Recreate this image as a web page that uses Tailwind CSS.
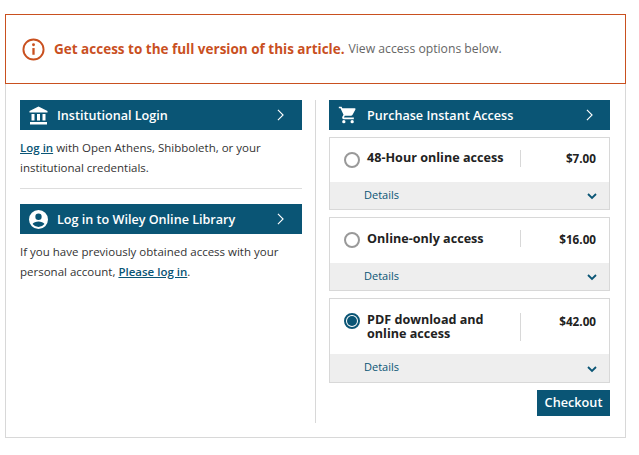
<!DOCTYPE html>
<html lang="en">
<head>
  <meta charset="UTF-8">
  <title>Get access</title>
  <script src="https://cdn.jsdelivr.net/npm/@tailwindcss/browser@4"></script>
</head>
<body class="bg-white font-['Open_Sans',sans-serif] text-[#333] w-[639px] h-[455px] overflow-hidden">
  <div class="w-[621px] ml-[5px] pt-[14px]">
    <!-- Alert -->
    <div class="h-[70px] border border-[#c9501f] flex items-center pl-[16px] text-[13.5px]">
      <svg class="w-[23px] h-[23px] mr-[9px] shrink-0" viewBox="0 0 24 24" fill="none" stroke="#c9501f">
        <circle cx="12" cy="12" r="10.5" stroke-width="2"/>
        <path d="M12 10.500v7" stroke-width="2.400"/>
        <circle cx="12" cy="7" r="1.500" fill="#c9501f" stroke="none"/>
      </svg>
      <span class="font-bold text-[#c9501f]">Get access to the full version of this article.</span>
      <span class="ml-[4px] text-[12.2px] text-[#666]">View access options below.</span>
    </div>

    <!-- Body -->
    <div class="h-[354px] border border-t-0 border-[#d8d8d8] pt-[16px] pl-[14px] flex">
      <!-- Left column -->
      <div class="w-[282px] text-[11.5px] leading-[20px]">
        <div class="h-[30px] bg-[#0a5575] text-white flex items-center pl-[9px] pr-[18px]">
          <svg class="w-[19px] h-[19px] mr-[9px]" viewBox="0 0 19 19" fill="white"><path d="M9.500 0.500 18.500 5v1.500H.5V5zM1 16h17v2.500H1zM2.500 8h3v6.500h-3zM8 8h3v6.500H8zM13.500 8h3v6.500h-3z"/></svg>
          <span class="text-[12.6px] leading-[20px] mt-px font-semibold flex-1">Institutional Login</span>
          <svg class="w-[7px] h-[12px]" viewBox="0 0 8 14" fill="none" stroke="white" stroke-width="1.300"><path d="M1 1l6 6-6 6"/></svg>
        </div>
        <p class="mt-[8px] pb-[10px] border-b border-[#ddd]"><a class="text-[#0a5575] font-semibold underline">Log in</a> with Open Athens, Shibboleth, or your institutional credentials.</p>
        <div class="mt-[15px] h-[30px] bg-[#0a5575] text-white flex items-center pl-[9px] pr-[18px]">
          <svg class="w-[19px] h-[19px] mr-[9px]" viewBox="0 0 24 24" fill="white"><path d="M12 0a12 12 0 1 0 0 24 12 12 0 0 0 0-24zm0 4.500a4 4 0 1 1 0 8 4 4 0 0 1 0-8zm0 17a9.500 9.500 0 0 1-7.500-3.700c.8-2 4.500-3.300 7.500-3.300s6.700 1.300 7.500 3.300A9.500 9.500 0 0 1 12 21.500z"/></svg>
          <span class="text-[12.6px] leading-[20px] mt-px font-semibold flex-1">Log in to Wiley Online Library</span>
          <svg class="w-[7px] h-[12px]" viewBox="0 0 8 14" fill="none" stroke="white" stroke-width="1.300"><path d="M1 1l6 6-6 6"/></svg>
        </div>
        <p class="mt-[8px]">If you have previously obtained access with your personal account, <a class="text-[#0a5575] font-semibold underline">Please log in</a>.</p>
      </div>

      <!-- Divider -->
      <div class="w-px h-[323px] bg-[#d8d8d8] ml-[13px] mr-[13px]"></div>

      <!-- Right column -->
      <div class="w-[281px]">
        <div class="h-[30px] bg-[#0a5575] text-white flex items-center pl-[9px] pr-[17px]">
          <svg class="w-[20px] h-[20px] mr-[9px]" viewBox="0 0 24 24" fill="white"><path d="M7 18a2 2 0 1 0 0 4 2 2 0 0 0 0-4zM1 2v2h2l3.600 7.600-1.400 2.400c-.7 1.400.3 3 1.800 3h12v-2H7.400c-.1 0-.2-.1-.2-.2L8.100 13h7.500c.7 0 1.400-.4 1.700-1l3.600-6.500c.4-.7-.1-1.500-.9-1.500H5.200l-.9-2H1zm16 16a2 2 0 1 0 0 4 2 2 0 0 0 0-4z"/></svg>
          <span class="text-[12.6px] leading-[20px] mt-px font-semibold flex-1">Purchase Instant Access</span>
          <svg class="w-[7px] h-[12px]" viewBox="0 0 8 14" fill="none" stroke="white" stroke-width="1.300"><path d="M1 1l6 6-6 6"/></svg>
        </div>

        <div class="mt-[7px] h-[73px] border border-[#d8d8d8] flex flex-col">
          <div class="flex-1 flex items-start pl-[14px] pr-[13px] pt-[13px] font-bold text-[#222]">
            <span class="w-4 h-4 rounded-full border-2 border-[#999] mr-[7px] mt-px shrink-0"></span>
            <span class="w-[145px] text-[12.6px] leading-[14px]">48-Hour online access</span>
            <span class="ml-auto w-[76px] h-[17px] -mt-[1px] border-l border-[#d8d8d8] text-[11.7px] text-right leading-[16px]">$7.00</span>
          </div>
          <div class="h-[27px] bg-[#eee] flex items-center pl-[34px] pr-[12px] text-[11px] text-[#0a5575]">
            <span class="flex-1">Details</span>
            <svg class="w-[10px] h-[7px] mt-[2px]" viewBox="0 0 10 7" fill="none" stroke="#0a5575" stroke-width="1.800"><path d="M1 1l4 4 4-4"/></svg>
          </div>
        </div>

        <div class="mt-[7px] h-[74px] border border-[#d8d8d8] flex flex-col">
          <div class="flex-1 flex items-start pl-[14px] pr-[13px] pt-[13px] font-bold text-[#222]">
            <span class="w-4 h-4 rounded-full border-2 border-[#999] mr-[7px] mt-px shrink-0"></span>
            <span class="w-[145px] text-[12.6px] leading-[16px]">Online-only access</span>
            <span class="ml-auto w-[76px] h-[17px] -mt-[1px] border-l border-[#d8d8d8] text-[11.7px] text-right leading-[19px]">$16.00</span>
          </div>
          <div class="h-[27px] bg-[#eee] flex items-center pl-[34px] pr-[12px] text-[11px] text-[#0a5575]">
            <span class="flex-1">Details</span>
            <svg class="w-[10px] h-[7px] mt-[2px]" viewBox="0 0 10 7" fill="none" stroke="#0a5575" stroke-width="1.800"><path d="M1 1l4 4 4-4"/></svg>
          </div>
        </div>

        <div class="mt-[7px] h-[85px] border border-[#d8d8d8] flex flex-col">
          <div class="flex-1 flex items-start pl-[14px] pr-[13px] pt-[14px] font-bold text-[#222]">
            <span class="w-4 h-4 rounded-full border-2 border-[#0a5575] mr-[7px] shrink-0 flex items-center justify-center"><span class="w-[10px] h-[10px] rounded-full bg-[#0a5575]"></span></span>
            <span class="w-[145px] text-[12.6px] leading-[14px]">PDF download and online access</span>
            <span class="ml-auto w-[76px] h-[28px] border-l border-[#d8d8d8] text-[11.7px] text-right leading-[17px]">$42.00</span>
          </div>
          <div class="h-[28px] bg-[#eee] flex items-center pl-[34px] pr-[12px] text-[11px] text-[#0a5575]">
            <span class="flex-1 -mt-[2px]">Details</span>
            <svg class="w-[10px] h-[7px] mt-[2px]" viewBox="0 0 10 7" fill="none" stroke="#0a5575" stroke-width="1.800"><path d="M1 1l4 4 4-4"/></svg>
          </div>
        </div>

        <div class="mt-[7px] flex justify-end">
          <button class="w-[73px] h-[26px] bg-[#0a5575] text-white text-[12.7px] font-semibold">Checkout</button>
        </div>
      </div>
    </div>
  </div>
</body>
</html>
